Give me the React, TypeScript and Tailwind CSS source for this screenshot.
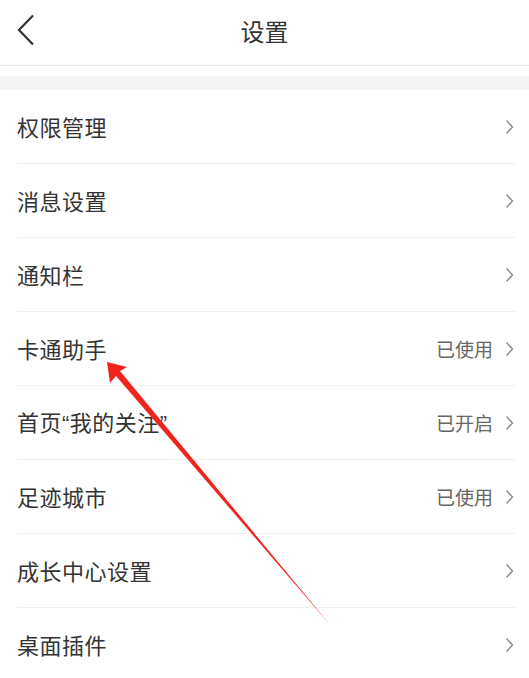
import React from 'react';

type Row = { label: React.ReactNode; key: string; value?: string };

const Q = ({ c }: { c: string }) => (
  <span style={{ fontFamily: '"Liberation Sans", Arial, sans-serif' }}>{c}</span>
);

const ROWS: Row[] = [
  { key: 'perm', label: '权限管理' },
  { key: 'msg', label: '消息设置' },
  { key: 'notify', label: '通知栏' },
  { key: 'cartoon', label: '卡通助手', value: '已使用' },
  {
    key: 'follow',
    label: (
      <>
        首页<Q c="“" />我的关注<Q c="”" />
      </>
    ),
    value: '已开启',
  },
  { key: 'city', label: '足迹城市', value: '已使用' },
  { key: 'growth', label: '成长中心设置' },
  { key: 'widget', label: '桌面插件' },
];

function Chevron() {
  return (
    <svg width="9" height="16" viewBox="0 0 9 16" className="shrink-0">
      <path d="M1.5 1.5 L7.5 8 L1.5 14.5" fill="none" stroke="#8a8a8a" strokeWidth="1.4" />
    </svg>
  );
}

export default function App() {
  return (
    <div
      className="relative w-[529px] h-[678px] overflow-hidden bg-white text-[#333]"
      style={{ fontFamily: '"Noto Sans CJK SC", "Noto Sans", sans-serif' }}
    >
      {/* header */}
      <div className="relative flex h-[66px] items-center justify-center border-b border-[#ececec]">
        <svg width="20" height="32" viewBox="0 0 20 32" className="absolute left-[16px] top-[14px]">
          <path d="M17 1.5 L3 16 L17 30.5" fill="none" stroke="#333" strokeWidth="2.2" />
        </svg>
        <span className="-mt-[3px] text-[24px] leading-none text-[#333]">设置</span>
      </div>
      <div className="h-[10px] bg-white" />
      <div className="h-[14px] bg-[#f4f4f4]" />

      {/* list */}
      <div>
        {ROWS.map((r) => (
          <div key={r.key} className="mx-[17px] mr-[14px] flex h-[74px] items-center border-b border-[#f0f0f0]">
            <span className="-mt-[1px] flex-1 text-[22px] leading-none tracking-[0.5px] text-[#333]">{r.label}</span>
            {r.value && <span className="mr-[12px] text-[19px] leading-none text-[#666]">{r.value}</span>}
            <span className="mr-[1px]">
              <Chevron />
            </span>
          </div>
        ))}
      </div>

      {/* red annotation arrow */}
      <svg className="pointer-events-none absolute left-0 top-0" width="529" height="678" viewBox="0 0 529 678">
        <path d="M107 362 L127 367 L120 371 L331 626 L116 376 L110 383 Z" fill="#f0241c" />
      </svg>
    </div>
  );
}
